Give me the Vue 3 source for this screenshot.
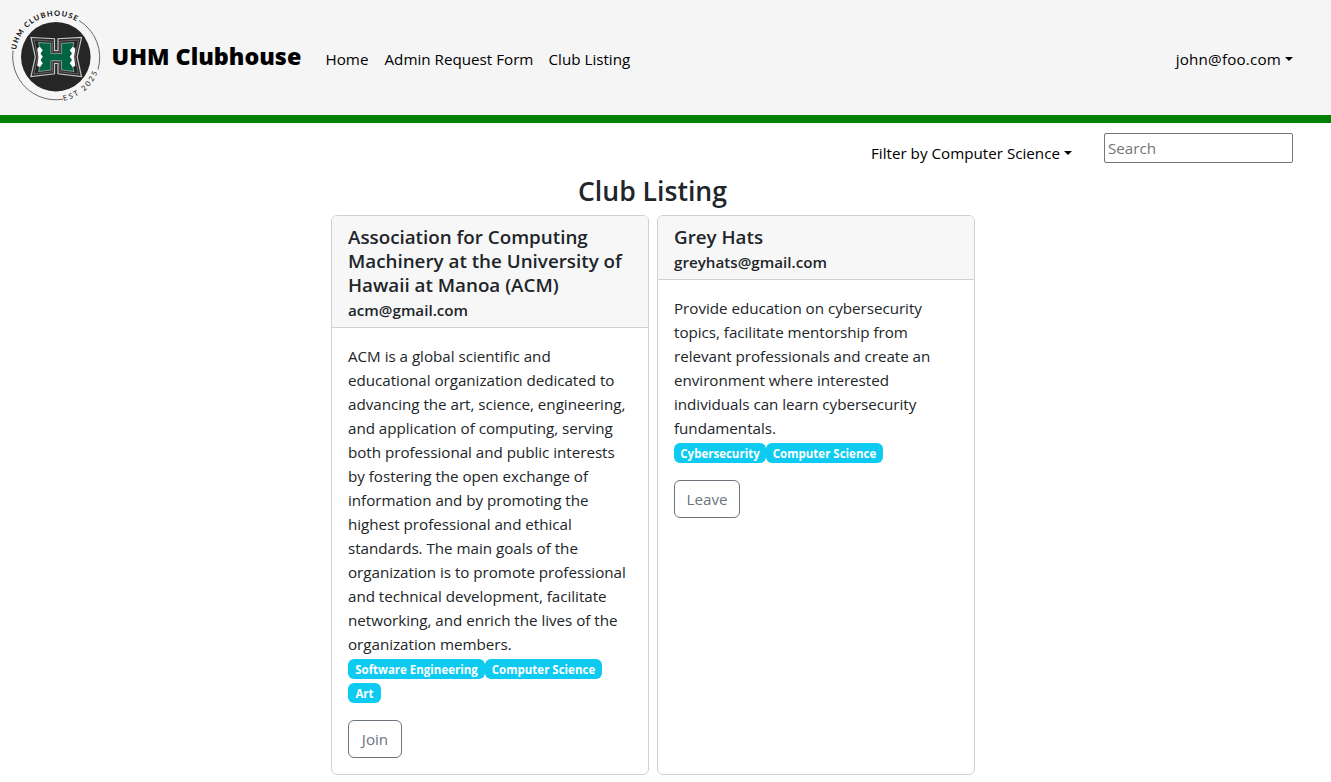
<script setup>
const links = [
  { label: 'Home', cls: 'w-home' },
  { label: 'Admin Request Form', cls: 'w-admin' },
  { label: 'Club Listing', cls: 'w-list' },
]
const clubs = [
  {
    name: ['Association for Computing', 'Machinery at the University of', 'Hawaii at Manoa (ACM)'],
    email: 'acm@gmail.com',
    text: [
      'ACM is a global scientific and', 'educational organization dedicated to',
      'advancing the art, science, engineering,', 'and application of computing, serving',
      'both professional and public interests', 'by fostering the open exchange of',
      'information and by promoting the', 'highest professional and ethical',
      'standards. The main goals of the', 'organization is to promote professional',
      'and technical development, facilitate', 'networking, and enrich the lives of the',
      'organization members.',
    ],
    tags: [{ t: 'Software Engineering', w: 137 }, { t: 'Computer Science', w: 117 }, { t: 'Art', w: 33 }],
    action: 'Join',
    width: 54,
  },
  {
    name: ['Grey Hats'],
    email: 'greyhats@gmail.com',
    text: [
      'Provide education on cybersecurity', 'topics, facilitate mentorship from',
      'relevant professionals and create an', 'environment where interested',
      'individuals can learn cybersecurity', 'fundamentals.',
    ],
    tags: [{ t: 'Cybersecurity', w: 92 }, { t: 'Computer Science', w: 117 }],
    action: 'Leave',
    width: 66,
  },
]
</script>

<template>
  <div class="page">
    <header class="navbar">
      <svg class="logo" width="100" height="100" viewBox="5 6 100 100">
        <defs>
          <path id="top-arc" d="M16 50A40.500 40.500 0 0 1 96 50" />
          <path id="low-arc" d="M63.500 100.600A44.500 44.500 0 0 0 100.500 56.700" />
        </defs>
        <path d="M79 20.500A43.300 43.300 0 0 1 98 69.500M63 99.200A43.300 43.300 0 0 1 13.100 50.500" fill="none" stroke="#444" stroke-width=".8" />
        <circle cx="55.800" cy="56.700" r="34.800" fill="#262626" />
        <path d="M31 37.500L54.500 38.700V50.500H58V38.700L81.500 37.500L77.200 57L81.500 76.500L58 73.800V63.500H54.500V73.800L31 76.500L35.300 57Z" fill="#262626" stroke="#c9c9c9" stroke-width="1.200" />
        <path d="M34 40L52.500 41.200V52H60V41.200L78.500 40L75 57L78.500 74L60 71.800V61.800H52.500V71.800L34 74L37.500 57Z" fill="none" stroke="#8a8a8a" stroke-width=".6" />
        <path d="M38.500 42.500L50.900 43.300V53.600H61.600V43.300L74 42.500L72.500 48V66L74 71.500L61.600 70V60.600H50.900V70L38.500 71.500L40 66V48Z" fill="#006341" stroke="#e6ece9" stroke-width=".5" />
        <path d="M38.500 47.200L40 47L42.800 50.300L40.500 53.500L42.800 56.800L40.500 60L42.800 63.300L40 67L37.200 66L38.400 57L37.200 49ZM74 47.200L72.500 47L69.700 50.300L72 53.500L69.700 56.800L72 60L69.700 63.300L72.500 67L75.300 66L74.100 57L75.300 49Z" fill="#fff" />
        <text class="arc bold"><textPath href="#top-arc" textLength="78.500">UHM CLUBHOUSE</textPath></text>
        <text class="arc"><textPath href="#low-arc" textLength="46">EST 2025</textPath></text>
      </svg>
      <span class="brand">UHM Clubhouse</span>
      <nav class="links"><a v-for="l in links" :key="l.label" :class="l.cls">{{ l.label }}</a></nav>
      <a class="toggle user">john@foo.com</a>
    </header>
    <div class="tools">
      <a class="toggle filter">Filter by Computer Science</a>
      <input placeholder="Search" />
    </div>
    <main>
      <h2>Club Listing</h2>
      <div class="cards">
        <article v-for="c in clubs" :key="c.email" class="card">
          <div class="head">
            <h5><span v-for="n in c.name" :key="n">{{ n }}</span></h5>
            <h6>{{ c.email }}</h6>
          </div>
          <div class="body">
            <p><span v-for="s in c.text" :key="s">{{ s }}</span></p>
            <div class="tags"><b v-for="g in c.tags" :key="g.t" :style="{ width: g.w + 'px' }">{{ g.t }}</b></div>
            <button :style="{ width: c.width + 'px' }">{{ c.action }}</button>
          </div>
        </article>
      </div>
    </main>
  </div>
</template>

<style>
body { margin: 0; background: #fff; overflow: hidden; }
</style>
<style scoped>
* { box-sizing: border-box; }
.page { width: 1331px; height: 782px; font: 15.2px/24px "Open Sans", sans-serif; color: #212529; white-space: nowrap; }
.navbar { height: 123px; background: #f5f5f5; border-bottom: 8px solid green; display: flex; align-items: center; padding: 0 38px 4px 5px; color: #000; }
.logo { flex: none; overflow: visible; }
.arc { font: 7.4px Lato, sans-serif; fill: #222; }
.bold { font-weight: 900; }
.brand { font-size: 23.3px; font-weight: 800; width: 190px; margin: 0 24px 0 6.5px; }
.links { display: flex; gap: 16px; padding-top: 6px; }
.w-home { width: 43px; }
.w-admin { width: 148px; }
.toggle::after { content: ""; display: inline-block; margin-left: 4px; vertical-align: 4px; border: 4.5px solid transparent; border-top-color: currentColor; border-bottom: 0; }
.user { margin-left: auto; padding-top: 6px; letter-spacing: .18px; }
.tools { display: flex; justify-content: flex-end; padding: 10px 38px 0 0; height: 50px; }
.filter { padding-top: 8px; margin-right: 32px; color: #000; }
input { width: 189px; height: 30px; border: 1px solid #767676; border-radius: 2px; padding: 1px 3px; font: inherit; }
input::placeholder { color: #757575; opacity: 1; }
main { width: 644px; margin-left: 331px; }
h2 { margin: 0; padding: 1px 1px 7px 0; font-size: 26.6px; line-height: 34px; font-weight: 600; text-align: center; }
.cards { display: grid; grid-template-columns: 318px 318px; gap: 8px; height: 560px; }
.card { border: 1px solid #d0d0d0; border-radius: 6px; overflow: hidden; }
.head { background: #f7f7f7; border-bottom: 1px solid #d0d0d0; padding: 9px 16px 6px; }
h5 { margin: 0; font-size: 18.8px; line-height: 24px; font-weight: 600; }
h6 { margin: 2px 0 0; font-size: 15.2px; line-height: 22px; font-weight: 600; }
h5 span, p span { display: block; }
.body { padding: 16px; }
p { margin: 0; letter-spacing: -.03px; }
.tags { display: flex; flex-wrap: wrap; row-gap: 4px; padding-top: 3px; }
.tags b { height: 20px; border-radius: 6px; background: #0dcaf0; color: #fff; font-size: 11.5px; line-height: 21px; text-align: center; }
button { display: block; height: 38px; margin-top: 17px; padding: 0; border: 1px solid #6c757d; border-radius: 6px; background: #fff; color: #6c757d; font: inherit; }
</style>
